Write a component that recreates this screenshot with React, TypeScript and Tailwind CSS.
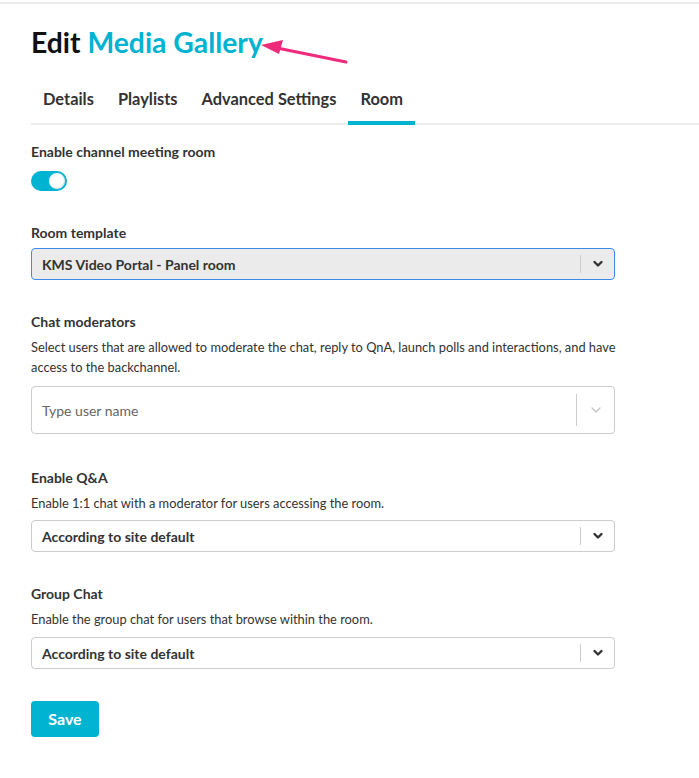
import React from "react";

const tabs = ["Details", "Playlists", "Advanced Settings", "Room"];

function Chevron({ light }: { light?: boolean }) {
  return (
    <svg width="12" height="12" viewBox="0 0 12 12" className="block">
      <path
        d={light ? "M2 4 L6 8 L10 4" : "M2.5 4 L6 7.5 L9.5 4"}
        fill="none"
        stroke={light ? "#c4c4c4" : "#333333"}
        strokeWidth={light ? 1.4 : 2.4}
        strokeLinecap="round"
        strokeLinejoin="round"
      />
    </svg>
  );
}

function Select({ value, active }: { value: string; active?: boolean }) {
  return (
    <div
      className={`flex items-center h-8 w-[584px] rounded border ${
        active ? "bg-[#ebebeb] border-[#3d8be8]" : "bg-white border-[#cccccc]"
      }`}
    >
      <span className="flex-1 pl-[10px] text-[14px] font-bold text-[#333333]">{value}</span>
      <span className="w-px h-[18px] bg-[#cccccc]" />
      <span className="w-[33px] flex justify-center">
        <Chevron />
      </span>
    </div>
  );
}

function Field({
  label,
  desc,
  children,
  className = "",
  boxGap = "mt-2",
}: {
  label: string;
  desc?: React.ReactNode;
  children: React.ReactNode;
  className?: string;
  boxGap?: string;
}) {
  return (
    <div className={className}>
      <div className="text-[14px] font-bold text-[#333333] leading-5">{label}</div>
      {desc && <p className="mt-[5px] text-[12.85px] text-[#333333] leading-5">{desc}</p>}
      <div className={desc ? boxGap : "mt-[5px]"}>{children}</div>
    </div>
  );
}

export default function App() {
  return (
    <div className="min-h-[778px] bg-white font-['Lato','Open_Sans',sans-serif] text-[#333333]">
      <div className="border-t-2 border-[#ebebeb] mt-[2px]" />
      <div className="relative pl-[31px] pt-[20px]">
        <h1 className="text-[28.3px] font-bold leading-9 text-[#111111]">
          Edit <span className="text-[#00b3d1]">Media Gallery</span>
        </h1>
        <svg className="absolute left-[257px] top-[33px]" width="95" height="30" viewBox="0 0 95 30">
          <path d="M89 25 L20 11" stroke="#ee2a7b" strokeWidth="3" strokeLinecap="round" />
          <path d="M4 8 L26 3 L22 17 Z" fill="#ee2a7b" />
        </svg>
        <nav className="flex mt-[27px] border-b-2 border-[#ececec]">
          {tabs.map((t) => (
            <div
              key={t}
              className={`px-3 pb-[10px] text-[16.4px] font-bold leading-6 -mb-[2px] border-b-4 ${
                t === "Room" ? "border-[#00b3d1]" : "border-transparent"
              }`}
            >
              {t}
            </div>
          ))}
        </nav>

        <div className="mt-[17px] text-[14px] font-bold leading-5">Enable channel meeting room</div>
        <div className="mt-[9px] w-9 h-5 rounded-full bg-[#00b3d1] relative">
          <div className="absolute right-[1px] top-[1px] w-[18px] h-[18px] rounded-full bg-white border border-[#00b3d1] shadow-[inset_-1px_-1px_2px_rgba(0,0,0,0.12)]" />
        </div>

        <Field label="Room template" className="mt-[32px]">
          <Select value="KMS Video Portal - Panel room" active />
        </Field>

        <Field
          label="Chat moderators"
          desc={
            <span className="whitespace-nowrap">
              Select users that are allowed to moderate the chat, reply to QnA, launch polls and interactions, and have
              <br />
              access to the backchannel.
            </span>
          }
          className="mt-[32px]"
          boxGap="mt-[9px]"
        >
          <div className="flex items-center h-12 w-[584px] rounded border border-[#cccccc]">
            <span className="flex-1 pl-[10px] text-[14px] text-[#666666]">Type user name</span>
            <span className="w-px h-8 bg-[#cccccc]" />
            <span className="w-[37px] flex justify-center">
              <Chevron light />
            </span>
          </div>
        </Field>

        <Field
          label="Enable Q&A"
          desc="Enable 1:1 chat with a moderator for users accessing the room."
          className="mt-[34px]"
          boxGap="mt-[7px]"
        >
          <Select value="According to site default" />
        </Field>

        <Field label="Group Chat" desc="Enable the group chat for users that browse within the room." className="mt-[32px]">
          <Select value="According to site default" />
        </Field>

        <button className="mt-[32px] h-9 w-[68px] rounded bg-[#00b3d1] text-white text-[16px] font-bold">Save</button>
      </div>
    </div>
  );
}
